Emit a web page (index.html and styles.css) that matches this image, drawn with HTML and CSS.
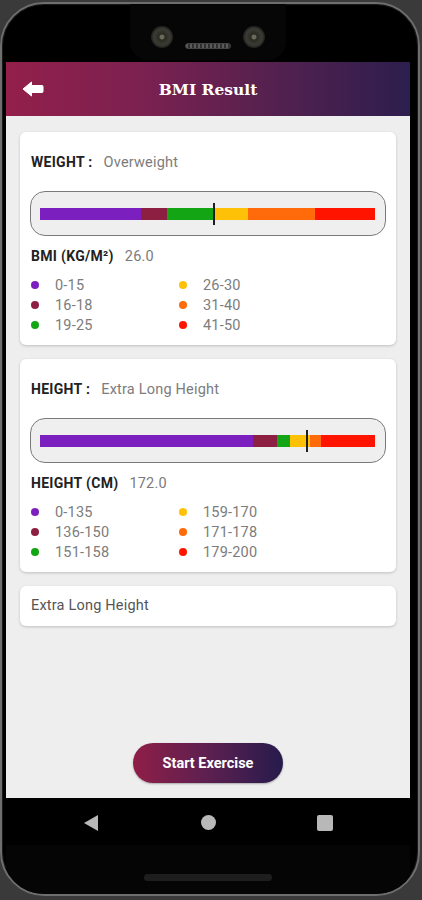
FILE: index.html
```html
<!DOCTYPE html>
<html lang="en">
<head>
<meta charset="utf-8">
<title>BMI Result</title>
<link rel="stylesheet" href="styles.css">
</head>
<body>
<div class="device">
  <div class="bezel-top">
    <div class="notch">
      <span class="cam"></span>
      <span class="speaker"></span>
      <span class="cam"></span>
    </div>
  </div>

  <div class="app">
    <header class="appbar">
      <span class="back">
        <svg width="22" height="16" viewBox="0 0 22 16"><path d="M1 8 L9.5 1 V4.5 H20 Q21 4.5 21 5.5 V10.5 Q21 11.5 20 11.5 H9.5 V15 Z" fill="#fff" stroke="#fff" stroke-width="1" stroke-linejoin="round"/></svg>
      </span>
      <h1 class="title">BMI Result</h1>
      <span></span>
    </header>

    <main class="content">
      <section class="card">
        <div class="stat"><span class="label">WEIGHT :</span><span class="value">Overweight</span></div>
        <div class="meter">
          <div class="bar">
            <span class="seg c1" style="width:30.15%"></span>
            <span class="seg c2" style="width:7.76%"></span>
            <span class="seg c3" style="width:14.03%"></span>
            <span class="seg c4" style="width:10.15%"></span>
            <span class="seg c5" style="width:20%"></span>
            <span class="seg c6" style="width:17.91%"></span>
            <span class="marker" style="left:51.9%"></span>
          </div>
        </div>
        <div class="stat stat-sub"><span class="label">BMI (KG/M²)</span><span class="value">26.0</span></div>
        <ul class="legend">
          <li><i class="dot c1"></i>0-15</li>
          <li><i class="dot c4"></i>26-30</li>
          <li><i class="dot c2"></i>16-18</li>
          <li><i class="dot c5"></i>31-40</li>
          <li><i class="dot c3"></i>19-25</li>
          <li><i class="dot c6"></i>41-50</li>
        </ul>
      </section>

      <section class="card">
        <div class="stat"><span class="label">HEIGHT :</span><span class="value">Extra Long Height</span></div>
        <div class="meter">
          <div class="bar">
            <span class="seg c1" style="width:63.58%"></span>
            <span class="seg c2" style="width:7.16%"></span>
            <span class="seg c3" style="width:3.88%"></span>
            <span class="seg c4" style="width:5.97%"></span>
            <span class="seg c5" style="width:3.28%"></span>
            <span class="seg c6" style="width:16.13%"></span>
            <span class="marker" style="left:79.7%"></span>
          </div>
        </div>
        <div class="stat stat-sub"><span class="label">HEIGHT (CM)</span><span class="value">172.0</span></div>
        <ul class="legend">
          <li><i class="dot c1"></i>0-135</li>
          <li><i class="dot c4"></i>159-170</li>
          <li><i class="dot c2"></i>136-150</li>
          <li><i class="dot c5"></i>171-178</li>
          <li><i class="dot c3"></i>151-158</li>
          <li><i class="dot c6"></i>179-200</li>
        </ul>
      </section>

      <section class="card card-note">Extra Long Height</section>
    </main>

    <div class="actions">
      <button class="start" type="button">Start Exercise</button>
    </div>
  </div>

  <nav class="sysnav">
    <span class="nav-back"></span>
    <span class="nav-home"></span>
    <span class="nav-recent"></span>
  </nav>
  <div class="chin"><span class="grill"></span></div>
</div>
</body>
</html>
```

FILE: styles.css
```css
* { box-sizing: border-box; }

html, body {
  margin: 0;
  padding: 0;
}

body {
  width: 422px;
  height: 900px;
  overflow: hidden;
  background: #3a3a3a;
  font-family: Roboto, "Liberation Sans", sans-serif;
  padding-top: 2px;
}

.device {
  width: 420px;
  height: 894px;
  border: 2px solid #6e6e6e;
  border-radius: 44px;
  background: #000;
  padding: 0 8px 0 4px;
  display: flex;
  flex-direction: column;
  overflow: hidden;
  box-shadow: inset 0 0 0 1px #1a1a1a;
}

/* top bezel */
.bezel-top {
  height: 58px;
  display: flex;
  justify-content: center;
  flex-shrink: 0;
}

.notch {
  width: 156px;
  height: 56px;
  background: #060606;
  border-radius: 0 0 18px 18px;
  display: flex;
  justify-content: center;
  align-items: flex-start;
  gap: 12px;
}

.cam {
  width: 22px;
  height: 22px;
  margin-top: 22px;
  border-radius: 50%;
  background: radial-gradient(circle at 50% 50%, #6a6a5a 0 2px, #2a2a24 3px, #3c3c34 8px, #1e1e1e 11px);
}

.speaker {
  width: 46px;
  height: 6px;
  margin-top: 39px;
  border-radius: 3px;
  background: repeating-linear-gradient(90deg, #5a5a5a 0 2px, #2e2e2e 2px 4px);
  border: 1px solid #444;
}

/* app */
.app {
  height: 736px;
  flex-shrink: 0;
  display: flex;
  flex-direction: column;
  background: #eeeeee;
}

.appbar {
  height: 54px;
  flex-shrink: 0;
  display: grid;
  grid-template-columns: 1fr auto 1fr;
  align-items: center;
  padding: 0 16px;
  background: linear-gradient(90deg, #931f4a 0%, #7a2150 35%, #56214f 65%, #2c1e4e 100%);
}

.back {
  display: flex;
  align-items: center;
}

.title {
  margin: 0;
  color: #fff;
  font-family: "DejaVu Serif", serif;
  font-weight: bold;
  font-size: 15.5px;
  letter-spacing: 0;
}

.content {
  flex: 1;
  padding: 16px 14px 0;
  display: flex;
  flex-direction: column;
  gap: 14px;
}

.card {
  background: #fff;
  border-radius: 6px;
  padding: 22px 10px 10px;
  box-shadow: 0 1px 3px rgba(0, 0, 0, 0.2);
}

.stat {
  display: flex;
  align-items: baseline;
  gap: 11px;
  height: 16px;
  line-height: 16px;
  padding-left: 1px;
}

.label {
  font-size: 14px;
  font-weight: 700;
  letter-spacing: 0.3px;
  color: #222;
}

.value {
  font-size: 14.5px;
  letter-spacing: 0.2px;
  color: #7c7c7c;
}

.stat-sub {
  margin-top: 12px;
}

.meter {
  margin-top: 21px;
  height: 45px;
  border: 1px solid #7a7a7a;
  border-radius: 15px;
  background: #efefef;
  padding: 0 10px 0 9px;
  display: flex;
  align-items: center;
}

.bar {
  position: relative;
  display: flex;
  width: 100%;
  height: 12px;
}

.seg { display: block; height: 100%; }

.marker {
  position: absolute;
  top: -5px;
  width: 2px;
  height: 22px;
  margin-left: -1px;
  background: #1e1e1e;
}

.c1 { background: #7b1fbf; }
.c2 { background: #8c1f42; }
.c3 { background: #14a514; }
.c4 { background: #ffc107; }
.c5 { background: #ff6a0a; }
.c6 { background: #ff1400; }

.legend {
  list-style: none;
  margin: 11px 0 0;
  padding: 0 0 0 1px;
  display: grid;
  grid-template-columns: 148px 1fr;
  grid-auto-rows: 20px;
}

.legend li {
  display: flex;
  align-items: center;
  font-size: 14.5px;
  letter-spacing: 0.2px;
  color: #7c7c7c;
}

.dot {
  width: 8px;
  height: 8px;
  border-radius: 50%;
  margin-right: 16px;
}

.card-note {
  padding: 12px 11px;
  line-height: 16px;
  font-size: 14.5px;
  letter-spacing: 0.2px;
  color: #555;
}

.actions {
  display: flex;
  justify-content: center;
  padding-bottom: 15px;
}

.start {
  width: 150px;
  height: 40px;
  border: none;
  border-radius: 20px;
  background: linear-gradient(90deg, #8f1e47 0%, #5c2050 50%, #261b4c 100%);
  color: #fff;
  font-family: Roboto, "Liberation Sans", sans-serif;
  font-weight: 700;
  font-size: 14.5px;
  box-shadow: 0 1px 2px rgba(0, 0, 0, 0.3);
}

/* system nav */
.sysnav {
  height: 47px;
  flex-shrink: 0;
  display: flex;
  justify-content: center;
  align-items: center;
  gap: 101px;
  padding-top: 2px;
}

.nav-back {
  width: 0;
  height: 0;
  border-top: 8px solid transparent;
  border-bottom: 8px solid transparent;
  border-right: 14px solid #b8b8b8;
  margin-right: 2px;
}

.nav-home {
  width: 15px;
  height: 15px;
  border-radius: 50%;
  background: #b8b8b8;
}

.nav-recent {
  width: 16px;
  height: 16px;
  border-radius: 2px;
  background: #b8b8b8;
}

.chin {
  flex: 1;
  background: #050505;
  display: flex;
  justify-content: center;
  padding-top: 29px;
}

.grill {
  width: 128px;
  height: 7px;
  border-radius: 4px;
  background: #1e1e1e;
}
```
